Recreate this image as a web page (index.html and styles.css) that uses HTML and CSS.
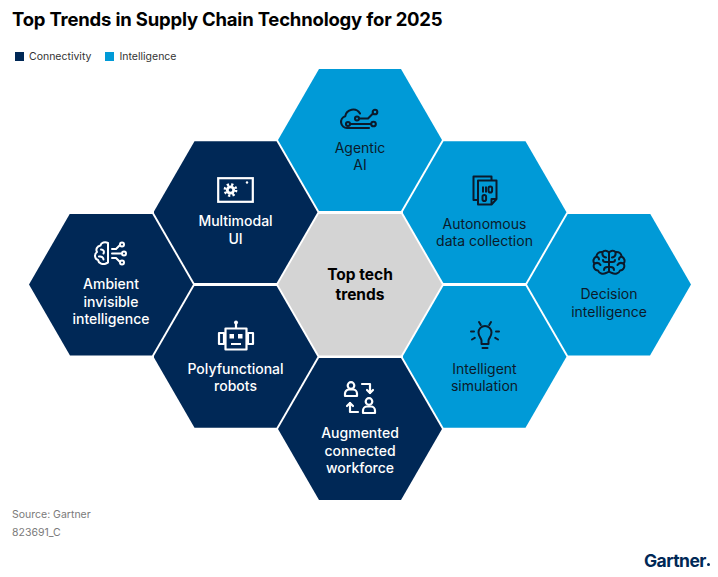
FILE: index.html
```html
<!DOCTYPE html>
<html lang="en">
<head>
<meta charset="utf-8">
<title>Top Trends in Supply Chain Technology for 2025</title>
<link rel="stylesheet" href="styles.css">
</head>
<body>
<div class="page">
  <h1 class="title">Top Trends in Supply Chain Technology for 2025</h1>
  <div class="legend">
    <span class="legend-item"><span class="swatch swatch-dark"></span>Connectivity</span>
    <span class="legend-item"><span class="swatch swatch-light"></span>Intelligence</span>
  </div>

  <div class="diagram">
    <!-- Agentic AI -->
    <div class="hex light h-agentic">
      <svg class="icon" width="42" height="23" viewBox="0 0 42 23" fill="none" stroke="currentColor" stroke-width="2.1" stroke-linecap="round" stroke-linejoin="round">
        <path d="M30 21 H8 A6 6 0 0 1 6.2 9.3 A8 8 0 0 1 21 6.5"/>
        <circle cx="18" cy="11.5" r="2"/>
        <path d="M20 11.5 H29 L33.5 7"/>
        <circle cx="36" cy="5" r="2.3"/>
        <circle cx="9" cy="17" r="2"/>
        <path d="M11 17 H32"/>
        <circle cx="34.5" cy="17" r="2.3"/>
      </svg>
      <div class="label">Agentic<br>AI</div>
    </div>

    <!-- Multimodal UI -->
    <div class="hex dark h-multimodal">
      <svg class="icon" width="37" height="26" viewBox="0 0 37 26" fill="none">
        <rect x="1.2" y="1.2" width="34.6" height="23.6" stroke="#fff" stroke-width="2.2"/>
        <circle cx="13.5" cy="13" r="4.6" fill="#fff"/>
        <circle cx="13.5" cy="13" r="5.6" stroke="#fff" stroke-width="2.6" stroke-dasharray="2.2 2.2"/>
        <circle cx="13.5" cy="13" r="1.8" fill="#002856"/>
        <circle cx="30" cy="5.5" r="1.2" fill="#fff"/>
      </svg>
      <div class="label">Multimodal<br>UI</div>
    </div>

    <!-- Ambient invisible intelligence -->
    <div class="hex dark h-ambient">
      <svg class="icon" width="36" height="25" viewBox="0 0 36 25" fill="none" stroke="#fff" stroke-width="2" stroke-linecap="round" stroke-linejoin="round">
        <path d="M15 2 C12 0.5 8 1.5 7.5 4.5 C4 5 2.5 8.5 4 11 C1 13 1.5 18 5 19 C5.5 22.5 10 24 13 22.5 L15 21.5 Z"/>
        <path d="M8 8.5 C10.5 8.5 11.5 10.5 10.5 12.5 M6 15.5 C8.5 15 10.5 16.5 10.5 18.5"/>
        <path d="M19 8 H23 L26.5 4.5"/>
        <circle cx="29" cy="3.5" r="2"/>
        <path d="M19 12.5 H28"/>
        <circle cx="31" cy="12.5" r="2"/>
        <path d="M19 17 H23 L26.5 20.5"/>
        <circle cx="29" cy="21.5" r="2"/>
      </svg>
      <div class="label">Ambient<br>invisible<br>intelligence</div>
    </div>

    <!-- Center -->
    <div class="hex center h-center">
      <div class="label">Top tech<br>trends</div>
    </div>

    <!-- Polyfunctional robots -->
    <div class="hex dark h-poly">
      <svg class="icon" width="38" height="32" viewBox="0 0 38 32" fill="none" stroke="#fff" stroke-width="2.2" stroke-linejoin="round">
        <rect x="2" y="14" width="5" height="11"/>
        <rect x="31" y="14" width="5" height="11"/>
        <rect x="8.5" y="9.5" width="21" height="21"/>
        <path d="M19 5 V9.5"/>
        <circle cx="19" cy="3.5" r="2" fill="#fff" stroke="none"/>
        <rect x="12.5" y="15" width="4.5" height="4.5" fill="#fff" stroke="none"/>
        <rect x="21" y="15" width="4.5" height="4.5" fill="#fff" stroke="none"/>
        <path d="M14 25 H24"/>
      </svg>
      <div class="label">Polyfunctional<br>robots</div>
    </div>

    <!-- Augmented connected workforce -->
    <div class="hex dark h-augmented">
      <svg class="icon" width="34" height="34" viewBox="0 0 34 34" fill="none" stroke="#fff" stroke-width="2.2" stroke-linecap="round" stroke-linejoin="round">
        <circle cx="8" cy="4.5" r="3.3"/>
        <path d="M2 15 V12.5 A4 4 0 0 1 6 8.5 H10 A4 4 0 0 1 14 12.5 V15 H2"/>
        <path d="M19 3 H27 V12"/>
        <path d="M24 9 L27 12 L30 9"/>
        <path d="M15 31 H7 V22"/>
        <path d="M4 25 L7 22 L10 25"/>
        <circle cx="26" cy="20.5" r="3.3"/>
        <path d="M20 32 V29.5 A4 4 0 0 1 24 25.5 H28 A4 4 0 0 1 32 29.5 V32 H20"/>
      </svg>
      <div class="label">Augmented<br>connected<br>workforce</div>
    </div>

    <!-- Autonomous data collection -->
    <div class="hex light h-autonomous">
      <svg class="icon" width="26" height="31" viewBox="0 0 26 31" fill="none" stroke="currentColor" stroke-width="2" stroke-linejoin="round">
        <path d="M5 25 H1.5 V1.5 H19.5 V5.5"/>
        <path d="M6 5.5 H24.5 V24 L19.5 29.5 H6 Z"/>
        <path d="M24.5 24 H19.5 V29.5"/>
        <path d="M11 11.5 V17.5 M14 11.5 V17.5"/>
        <rect x="16.5" y="11.5" width="3.6" height="6" rx="1.8"/>
        <rect x="10.5" y="20" width="3.6" height="6" rx="1.8"/>
      </svg>
      <div class="label">Autonomous<br>data collection</div>
    </div>

    <!-- Intelligent simulation -->
    <div class="hex light h-sim">
      <svg class="icon" width="32" height="32" viewBox="0 0 32 32" fill="none" stroke="currentColor" stroke-width="2" stroke-linecap="round" stroke-linejoin="round">
        <path d="M12.5 25 V21.5 C12.5 19.5 9.5 17.5 9.5 13.5 A6.5 6.5 0 0 1 22.5 13.5 C22.5 17.5 19.5 19.5 19.5 21.5 V25 Z"/>
        <path d="M13.5 29 H18.5"/>
        <path d="M10 3 L11.8 6 M22 3 L20.2 6 M2 12.5 H5 M27 12.5 H30 M3 20.5 L5.8 18.8 M29 20.5 L26.2 18.8"/>
      </svg>
      <div class="label">Intelligent<br>simulation</div>
    </div>

    <!-- Decision intelligence -->
    <div class="hex light h-decision">
      <svg class="icon" width="34" height="27" viewBox="0 0 34 27" fill="none" stroke="currentColor" stroke-width="2" stroke-linecap="round" stroke-linejoin="round">
        <path d="M17 3.5 C15.5 1.5 12 1 10.5 3 C7 2.5 4.5 4.5 4.5 7.5 C1.5 8.5 0.5 12.5 2.5 14.5 C0.5 17.5 2.5 21.5 6 21.5 C7 24.5 11 25.5 14 24 C15.5 23.5 17 22.5 17 22.5 C17 22.5 18.5 23.5 20 24 C23 25.5 27 24.5 28 21.5 C31.5 21.5 33.5 17.5 31.5 14.5 C33.5 12.5 32.5 8.5 29.5 7.5 C29.5 4.5 27 2.5 23.5 3 C22 1 18.5 1.5 17 3.5 Z"/>
        <path d="M17 3.5 V22.5"/>
        <path d="M10.5 3 C10 6 11.5 8 14 8.5 M4.5 7.5 C6 8 7 9 7 10.5 M2.5 14.5 C5 13.5 7.5 14 8.5 16 M17 13 H13.5 C12 13 11 12 11 11 M12 21 C12 19 13.5 18 15.5 18"/>
        <path d="M23.5 3 C24 6 22.5 8 20 8.5 M29.5 7.5 C28 8 27 9 27 10.5 M31.5 14.5 C29 13.5 26.5 14 25.5 16 M17 13 H20.5 C22 13 23 12 23 11 M22 21 C22 19 20.5 18 18.5 18"/>
      </svg>
      <div class="label">Decision<br>intelligence</div>
    </div>
  </div>

  <div class="footer">
    <div class="source">
      <div>Source: Gartner</div>
      <div>823691_C</div>
    </div>
    <div class="logo">Gartner<span class="logo-dot"></span></div>
  </div>
</div>
</body>
</html>
```

FILE: styles.css
```css
* { box-sizing: border-box; }

html, body {
  margin: 0;
  padding: 0;
  background: #fff;
}

body {
  font-family: Inter, "Noto Sans", "Liberation Sans", sans-serif;
  color: #111;
}

.page {
  width: 718px;
  height: 577px;
  display: flex;
  flex-direction: column;
  overflow: hidden;
}

.title {
  margin: 0;
  padding: 8px 0 0 12px;
  height: 40px;
  font-size: 18.5px;
  line-height: 23px;
  font-weight: 700;
  letter-spacing: -0.2px;
  color: #000;
}

.legend {
  height: 26px;
  display: flex;
  gap: 14px;
  padding: 7px 0 0 15px;
  font-size: 10.5px;
  line-height: 14px;
  color: #333;
}

.legend-item {
  display: flex;
  align-items: center;
  gap: 5px;
}

.swatch {
  width: 9px;
  height: 9px;
  display: inline-block;
}

.swatch-dark { background: #002856; }
.swatch-light { background: #009ad7; }

.diagram {
  position: relative;
  height: 439px;
  flex: none;
}

.hex {
  position: absolute;
  width: 164px;
  height: 142px;
  clip-path: polygon(25% 0, 75% 0, 100% 50%, 75% 100%, 25% 100%, 0 50%);
  display: flex;
  flex-direction: column;
  align-items: center;
  justify-content: center;
  text-align: center;
  font-size: 14px;
  line-height: 17.5px;
}

.hex.dark {
  background: #002856;
  color: #fff;
  font-weight: 500;
}

.hex.light {
  background: #009ad7;
  color: #0b1a2b;
  font-weight: 400;
}

.hex.center {
  background: #d4d4d4;
  color: #000;
  font-weight: 700;
  font-size: 15.5px;
  line-height: 20px;
}

.icon {
  display: block;
  margin-bottom: 9px;
  flex: none;
}

.h-agentic    { left: 278px;   top: 3px; }
.h-multimodal { left: 153.5px; top: 75.25px; }
.h-autonomous { left: 402.5px; top: 75.25px; }
.h-ambient    { left: 29px;    top: 147.5px; }
.h-center     { left: 278px;   top: 147.5px; }
.h-decision   { left: 527px;   top: 147.5px; }
.h-poly       { left: 153.5px; top: 219.75px; }
.h-sim        { left: 402.5px; top: 219.75px; }
.h-augmented  { left: 278px;   top: 292px; }

.footer {
  flex: 1;
  display: flex;
  justify-content: space-between;
  align-items: flex-end;
  padding: 0 8px 6px 12px;
}

.source {
  align-self: flex-start;
  padding-top: 1px;
  font-size: 10.5px;
  line-height: 18px;
  color: #7a7a7a;
}

.logo {
  font-size: 17.5px;
  font-weight: 700;
  color: #002856;
  letter-spacing: -0.5px;
  line-height: 20px;
  display: flex;
  align-items: flex-end;
}

.logo-dot {
  width: 3px;
  height: 3px;
  background: #002856;
  border-radius: 50%;
  margin: 0 0 5px 1px;
}
```
